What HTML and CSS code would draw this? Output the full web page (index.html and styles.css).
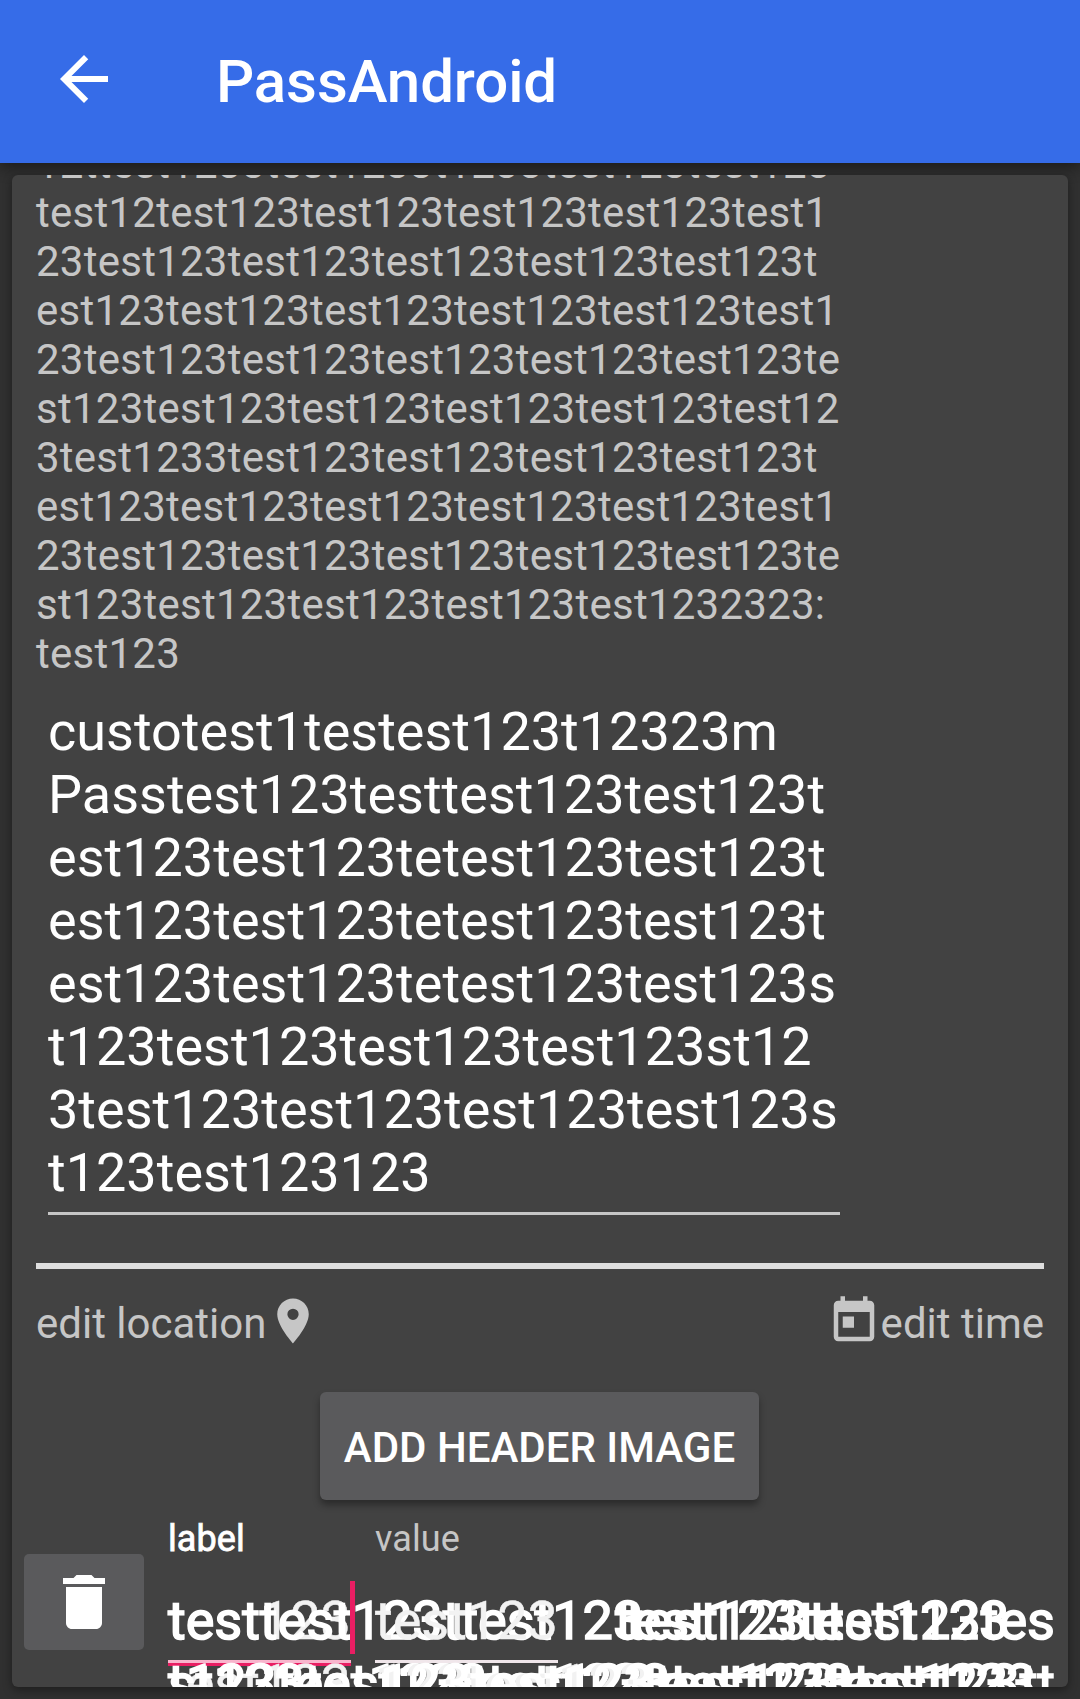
FILE: index.html
```html
<!DOCTYPE html>
<html lang="en">
<head>
<meta charset="utf-8">
<title>PassAndroid</title>
<link rel="stylesheet" href="styles.css">
</head>
<body>
<header class="toolbar">
  <svg class="toolbar-icon" viewBox="0 0 24 24"><path d="M20 11H7.83l5.59-5.59L12 4l-8 8 8 8 1.41-1.41L7.83 13H20v-2z"/></svg>
  <h1 class="toolbar-title">PassAndroid</h1>
</header>
<main class="content">
  <section class="card">
    <p class="description">12ttest1233test1233t1233test123test123<br>test12test123test123test123test123test1<br>23test123test123test123test123test123t<br>est123test123test123test123test123test1<br>23test123test123test123test123test123te<br>st123test123test123test123test123test12<br>3test1233test123test123test123test123t<br>est123test123test123test123test123test1<br>23test123test123test123test123test123te<br>st123test123test123test123test1232323:<br>test123</p>
    <div class="title-field">custotest1testest123t12323m<br>Passtest123testtest123test123t<br>est123test123tetest123test123t<br>est123test123tetest123test123t<br>est123test123tetest123test123s<br>t123test123test123test123st12<br>3test123test123test123test123s<br>t123test123123</div>
    <hr class="divider">
    <div class="actions">
      <span class="action">edit location<svg class="action-icon" viewBox="0 0 24 24"><path d="M12 2C8.13 2 5 5.13 5 9c0 5.25 7 13 7 13s7-7.75 7-13c0-3.87-3.13-7-7-7zm0 9.5a2.5 2.5 0 0 1 0-5 2.5 2.5 0 0 1 0 5z"/></svg></span>
      <span class="action"><svg class="action-icon" viewBox="0 0 24 24"><path d="M19 3h-1V1h-2v2H8V1H6v2H5c-1.11 0-1.99.9-1.99 2L3 19c0 1.1.89 2 2 2h14c1.1 0 2-.9 2-2V5c0-1.1-.9-2-2-2zm0 16H5V8h14v11zM7 10h5v5H7z"/></svg>edit time</span>
    </div>
    <button class="header-button">ADD HEADER IMAGE</button>
    <div class="field-row">
      <button class="delete-button"><svg class="delete-icon" viewBox="0 0 24 24"><path d="M6 19c0 1.1.9 2 2 2h8c1.1 0 2-.9 2-2V7H6v12zM19 4h-3.5l-1-1h-5l-1 1H5v2h14V4z"/></svg></button>
      <div class="field">
        <span class="hint hint-active">label</span>
        <div class="input input-active">
          <span class="run">test123<br>test123</span>
          <span class="run heavy">testtest123ttest123<br>t123test123test123test123test123</span>
          <span class="run heavy">&nbsp;<br>st123test123test123test123test123</span>
        </div>
      </div>
      <div class="field">
        <span class="hint">value</span>
        <div class="input">
          <span class="run">test123<br>123test123</span>
          <span class="run heavy overflow-run">test123test123tes</span>
          <span class="run heavy tail-run">test123ttest123</span>
          <span class="run heavy next-run">123test123test123test123tt</span>
        </div>
      </div>
    </div>
  </section>
</main>
</body>
</html>
```
FILE: styles.css
```css
* { box-sizing: border-box; }
body {
  margin: 0;
  height: 1699px;
  display: flex;
  flex-direction: column;
  overflow: hidden;
  background: #303030;
  color: #fff;
  font-family: Roboto, sans-serif;
}
.toolbar {
  flex: none;
  height: 163px;
  padding: 0 48px 6px;
  display: flex;
  align-items: center;
  gap: 96px;
  background: #366ce8;
  box-shadow: 0 4px 14px rgba(0, 0, 0, .45);
}
.toolbar-icon { width: 72px; height: 72px; fill: #fff; }
.toolbar-title { margin: 6px 0 0; font-size: 60px; line-height: 70px; font-weight: 500; letter-spacing: -.1px; }
.content { flex: 1; min-height: 0; padding: 12px; }
.card {
  height: 1512px;
  padding: 0 24px;
  display: flex;
  flex-direction: column;
  overflow: hidden;
  border-radius: 6px;
  background: #424242;
  box-shadow: 0 3px 10px rgba(0, 0, 0, .4);
}
.description {
  flex: none;
  margin: -36px 0 22px;
  font-size: 42px;
  line-height: 49px;
  letter-spacing: .25px;
  color: #c6c6c6;
  white-space: nowrap;
}
.title-field {
  flex: none;
  width: 792px;
  margin-left: 12px;
  padding-bottom: 8px;
  border-bottom: 3px solid #c6c6c6;
  font-size: 54px;
  line-height: 63px;
  white-space: nowrap;
}
.divider { flex: none; width: 100%; height: 6px; margin: 48px 0 25px; border: 0; background: #dedede; }
.actions { flex: none; display: flex; justify-content: space-between; height: 54px; }
.action { display: flex; align-items: center; font-size: 42px; line-height: 54px; padding-top: 6px; color: #c6c6c6; }
.action-icon { width: 54px; height: 54px; margin-top: -6px; fill: #c6c6c6; }
.header-button {
  flex: none;
  align-self: center;
  width: 439px;
  height: 108px;
  margin: 44px 1px 0 0;
  padding: 2px 0 0;
  border: 0;
  border-radius: 6px;
  background: #5a5a5c;
  color: #fff;
  font: 500 42px/49px Roboto, sans-serif;
  box-shadow: 0 5px 7px rgba(0, 0, 0, .35);
}
.field-row { flex: none; display: flex; margin: 18px 0 0 -12px; }
.delete-button {
  width: 120px;
  height: 96px;
  margin: 36px 24px 0 0;
  padding: 0;
  display: flex;
  align-items: center;
  justify-content: center;
  border: 0;
  border-radius: 5px;
  background: #5a5a5c;
}
.delete-icon { width: 72px; height: 72px; fill: #fff; }
.field { width: 183px; margin-right: 24px; }
.hint { display: block; height: 71px; font-size: 36px; line-height: 42px; letter-spacing: .1px; color: #c6c6c6; }
.hint-active { color: #fff; -webkit-text-stroke: .8px #fff; }
.input { position: relative; height: 74px; border-bottom: 3px solid #f0e6ea; }
.input-active { height: 77px; border-bottom: 3px solid #e91e63; box-shadow: inset 0 -3px #f8b4cc; }
.input-active::after {
  content: "";
  position: absolute;
  left: 182px;
  top: -8px;
  width: 5px;
  height: 73px;
  background: #e91e63;
}
/* Overlapping text runs extend past the narrow inputs. */
.run { position: absolute; left: 0; top: 0; font-size: 54px; line-height: 63px; color: #f2f2f2; -webkit-text-stroke: .5px #f2f2f2; white-space: nowrap; }
.heavy { color: #fff; -webkit-text-stroke: 1.6px #fff; }
.overflow-run { left: 240px; }
.tail-run { left: 251px; }
.next-run { left: 5px; top: 63px; }
```
